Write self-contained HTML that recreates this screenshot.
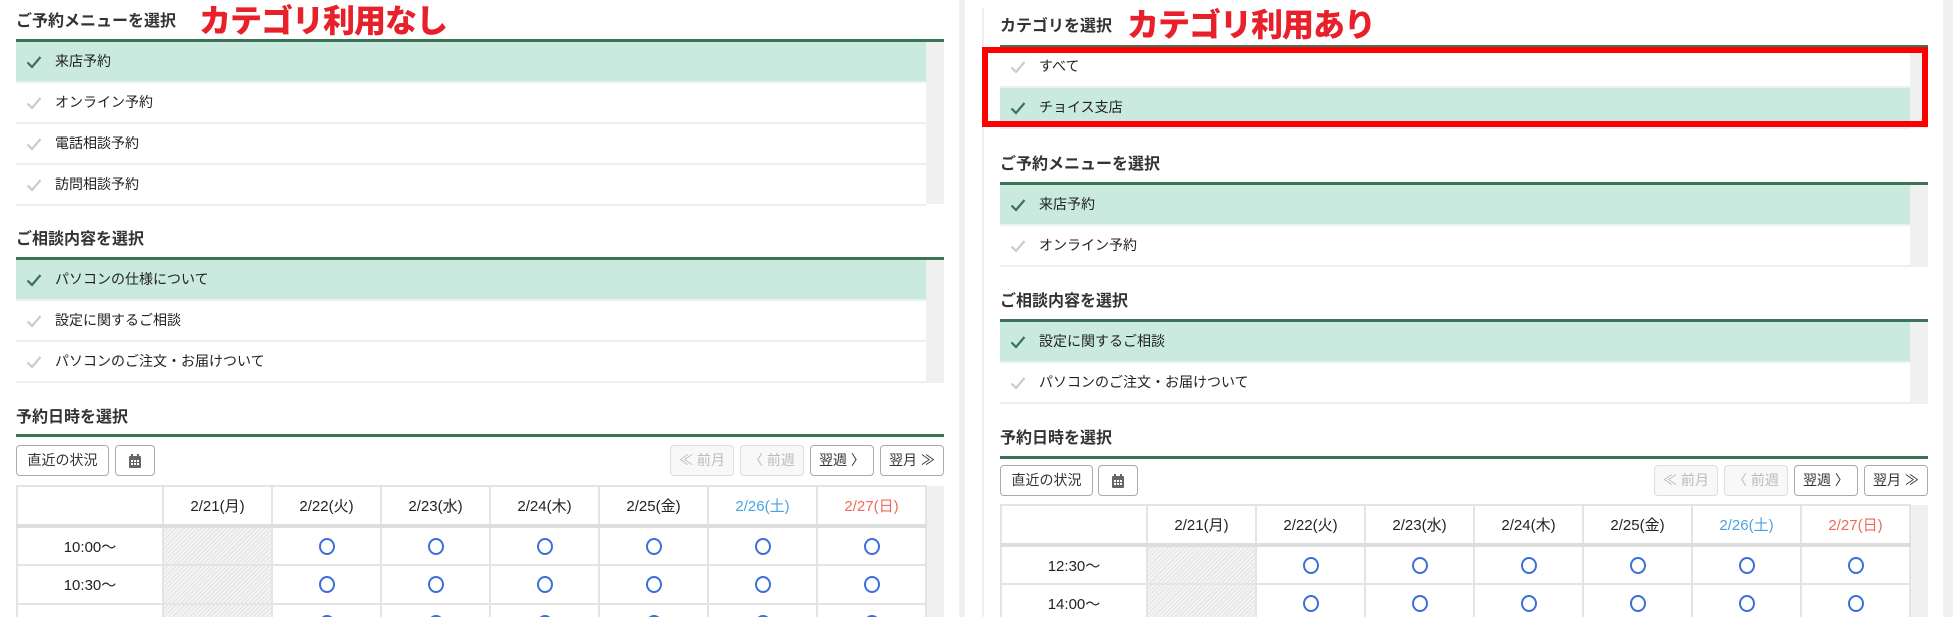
<!DOCTYPE html>
<html style="height:617px;overflow:hidden"><head><meta charset="utf-8">
<style>
*{margin:0;padding:0;box-sizing:border-box}
html,body{width:1953px;height:617px;overflow:hidden}
body{background:#fff;position:relative;font-family:"Liberation Sans","Noto Sans CJK JP",sans-serif;color:#222}
.a{position:absolute}
.h{position:absolute;font-size:16px;font-weight:bold;color:#333;line-height:20px}
.red{position:absolute;font-size:32px;font-weight:900;color:#e8202a;line-height:34px;letter-spacing:-1px}
.gl{position:absolute;height:3px;background:#3a7356}
.row{position:absolute;height:41px;border-bottom:2px solid #eee;font-size:14px;line-height:39px;padding-left:39px;background:#fff}
.row.on{background:#cbeadf}
.row svg{position:absolute;left:10px;top:13px}
.sb{position:absolute;background:#f0f0f0}
.btn{position:absolute;height:31px;border:1px solid #aaa;border-radius:4px;font-size:14px;line-height:29px;text-align:center;background:#fff;color:#333}
.btn.dis{border-color:#ddd;color:#bbb;background:#f8f8f8}
table{position:absolute;border-collapse:collapse;table-layout:fixed;font-size:15px}
td{border:2px solid #e4e4e4;text-align:center;height:39px}
tr.hd td{height:40px;border-bottom:4px solid #ddd}
td.x{background:repeating-linear-gradient(135deg,#f4f4f4 0 2px,#e2e2e2 2px 3px)}
.o{display:inline-block;width:16px;height:17px;border:2px solid #3b6fd8;border-radius:50%;vertical-align:middle}
.sat{color:#4aa3e0}.sun{color:#ee6a5a}
</style></head><body>
<svg width="0" height="0" style="position:absolute"><defs>
<symbol id="ck" viewBox="0 0 16 14"><path d="M1.5 7.5 L6 12 L14.5 2" fill="none" stroke="currentColor" stroke-width="2.2"/></symbol>
</defs></svg>

<!-- LEFT -->
<div class="h" style="left:16px;top:12px">ご予約メニューを選択</div>
<div class="red" style="left:199px;top:4px">カテゴリ利用なし</div>
<div class="gl" style="left:16px;top:39px;width:928px"></div>
<div class="sb" style="left:926px;top:42px;width:18px;height:162px"></div>
<div class="row on" style="left:16px;top:42px;width:910px;border-bottom-color:#e6f3ee"><svg width="16" height="14" style="color:#3a7356"><use href="#ck"/></svg>来店予約</div>
<div class="row" style="left:16px;top:83px;width:910px"><svg width="16" height="14" style="color:#ccc"><use href="#ck"/></svg>オンライン予約</div>
<div class="row" style="left:16px;top:124px;width:910px"><svg width="16" height="14" style="color:#ccc"><use href="#ck"/></svg>電話相談予約</div>
<div class="row" style="left:16px;top:165px;width:910px"><svg width="16" height="14" style="color:#ccc"><use href="#ck"/></svg>訪問相談予約</div>

<div class="h" style="left:16px;top:230px">ご相談内容を選択</div>
<div class="gl" style="left:16px;top:257px;width:928px"></div>
<div class="sb" style="left:926px;top:260px;width:18px;height:123px"></div>
<div class="row on" style="left:16px;top:260px;width:910px;border-bottom-color:#e6f3ee"><svg width="16" height="14" style="color:#3a7356"><use href="#ck"/></svg>パソコンの仕様について</div>
<div class="row" style="left:16px;top:301px;width:910px"><svg width="16" height="14" style="color:#ccc"><use href="#ck"/></svg>設定に関するご相談</div>
<div class="row" style="left:16px;top:342px;width:910px"><svg width="16" height="14" style="color:#ccc"><use href="#ck"/></svg>パソコンのご注文・お届けついて</div>

<div class="h" style="left:16px;top:408px">予約日時を選択</div>
<div class="gl" style="left:16px;top:434px;width:928px"></div>
<div class="btn" style="left:16px;top:445px;width:93px">直近の状況</div>
<div class="btn" style="left:115px;top:445px;width:40px"><svg width="14" height="16" viewBox="0 0 14 16" style="margin-top:7px"><rect x="1" y="3" width="12" height="12" rx="1" fill="#666"/><rect x="3" y="1" width="2" height="3" fill="#666"/><rect x="9" y="1" width="2" height="3" fill="#666"/><g fill="#fff"><rect x="3" y="7" width="2" height="2"/><rect x="6" y="7" width="2" height="2"/><rect x="9" y="7" width="2" height="2"/><rect x="3" y="10" width="2" height="2"/><rect x="6" y="10" width="2" height="2"/><rect x="9" y="10" width="2" height="2"/></g></svg></div>
<div class="btn dis" style="left:670px;top:445px;width:64px">≪ 前月</div>
<div class="btn dis" style="left:740px;top:445px;width:64px">〈 前週</div>
<div class="btn" style="left:810px;top:445px;width:64px">翌週 〉</div>
<div class="btn" style="left:880px;top:445px;width:64px">翌月 ≫</div>
<div class="sb" style="left:926px;top:486px;width:18px;height:131px"></div>
<table style="left:16px;top:485px;width:911px">
<colgroup><col style="width:146px"><col span="7" style="width:109px"></colgroup>
<tr class="hd"><td></td><td>2/21(月)</td><td>2/22(火)</td><td>2/23(水)</td><td>2/24(木)</td><td>2/25(金)</td><td class="sat">2/26(土)</td><td class="sun">2/27(日)</td></tr>
<tr><td>10:00〜</td><td class="x"></td><td><i class="o"></i></td><td><i class="o"></i></td><td><i class="o"></i></td><td><i class="o"></i></td><td><i class="o"></i></td><td><i class="o"></i></td></tr>
<tr><td>10:30〜</td><td class="x"></td><td><i class="o"></i></td><td><i class="o"></i></td><td><i class="o"></i></td><td><i class="o"></i></td><td><i class="o"></i></td><td><i class="o"></i></td></tr>
<tr><td>11:00〜</td><td class="x"></td><td><i class="o"></i></td><td><i class="o"></i></td><td><i class="o"></i></td><td><i class="o"></i></td><td><i class="o"></i></td><td><i class="o"></i></td></tr>
</table>

<!-- divider -->
<div class="sb" style="left:959px;top:0;width:6px;height:617px"></div>
<div class="a" style="left:982px;top:8px;width:2px;height:609px;background:#eee"></div>
<div class="sb" style="left:1943px;top:0;width:10px;height:617px"></div>

<!-- RIGHT -->
<div class="h" style="left:1000px;top:17px">カテゴリを選択</div>
<div class="red" style="left:1127px;top:8px">カテゴリ利用あり</div>
<div class="gl" style="left:1000px;top:45px;width:928px"></div>
<div class="sb" style="left:1910px;top:48px;width:18px;height:80px"></div>
<div class="row" style="left:1000px;top:47px;width:910px"><svg width="16" height="14" style="color:#ccc"><use href="#ck"/></svg>すべて</div>
<div class="row on" style="left:1000px;top:88px;width:910px;border-bottom-color:#e6f3ee"><svg width="16" height="14" style="color:#3a7356"><use href="#ck"/></svg>チョイス支店</div>
<div class="a" style="left:982px;top:47px;width:946px;height:80px;border:6px solid #ff0000"></div>

<div class="h" style="left:1000px;top:155px">ご予約メニューを選択</div>
<div class="gl" style="left:1000px;top:182px;width:928px"></div>
<div class="sb" style="left:1910px;top:185px;width:18px;height:82px"></div>
<div class="row on" style="left:1000px;top:185px;width:910px;border-bottom-color:#e6f3ee"><svg width="16" height="14" style="color:#3a7356"><use href="#ck"/></svg>来店予約</div>
<div class="row" style="left:1000px;top:226px;width:910px"><svg width="16" height="14" style="color:#ccc"><use href="#ck"/></svg>オンライン予約</div>

<div class="h" style="left:1000px;top:292px">ご相談内容を選択</div>
<div class="gl" style="left:1000px;top:319px;width:928px"></div>
<div class="sb" style="left:1910px;top:322px;width:18px;height:82px"></div>
<div class="row on" style="left:1000px;top:322px;width:910px;border-bottom-color:#e6f3ee"><svg width="16" height="14" style="color:#3a7356"><use href="#ck"/></svg>設定に関するご相談</div>
<div class="row" style="left:1000px;top:363px;width:910px"><svg width="16" height="14" style="color:#ccc"><use href="#ck"/></svg>パソコンのご注文・お届けついて</div>

<div class="h" style="left:1000px;top:429px">予約日時を選択</div>
<div class="gl" style="left:1000px;top:456px;width:928px"></div>
<div class="btn" style="left:1000px;top:465px;width:93px">直近の状況</div>
<div class="btn" style="left:1098px;top:465px;width:40px"><svg width="14" height="16" viewBox="0 0 14 16" style="margin-top:7px"><rect x="1" y="3" width="12" height="12" rx="1" fill="#666"/><rect x="3" y="1" width="2" height="3" fill="#666"/><rect x="9" y="1" width="2" height="3" fill="#666"/><g fill="#fff"><rect x="3" y="7" width="2" height="2"/><rect x="6" y="7" width="2" height="2"/><rect x="9" y="7" width="2" height="2"/><rect x="3" y="10" width="2" height="2"/><rect x="6" y="10" width="2" height="2"/><rect x="9" y="10" width="2" height="2"/></g></svg></div>
<div class="btn dis" style="left:1654px;top:465px;width:64px">≪ 前月</div>
<div class="btn dis" style="left:1724px;top:465px;width:64px">〈 前週</div>
<div class="btn" style="left:1794px;top:465px;width:64px">翌週 〉</div>
<div class="btn" style="left:1864px;top:465px;width:64px">翌月 ≫</div>
<div class="sb" style="left:1910px;top:505px;width:18px;height:112px"></div>
<table style="left:1000px;top:504px;width:911px">
<colgroup><col style="width:146px"><col span="7" style="width:109px"></colgroup>
<tr class="hd"><td></td><td>2/21(月)</td><td>2/22(火)</td><td>2/23(水)</td><td>2/24(木)</td><td>2/25(金)</td><td class="sat">2/26(土)</td><td class="sun">2/27(日)</td></tr>
<tr><td>12:30〜</td><td class="x"></td><td><i class="o"></i></td><td><i class="o"></i></td><td><i class="o"></i></td><td><i class="o"></i></td><td><i class="o"></i></td><td><i class="o"></i></td></tr>
<tr><td>14:00〜</td><td class="x"></td><td><i class="o"></i></td><td><i class="o"></i></td><td><i class="o"></i></td><td><i class="o"></i></td><td><i class="o"></i></td><td><i class="o"></i></td></tr>
</table>
</body></html>
